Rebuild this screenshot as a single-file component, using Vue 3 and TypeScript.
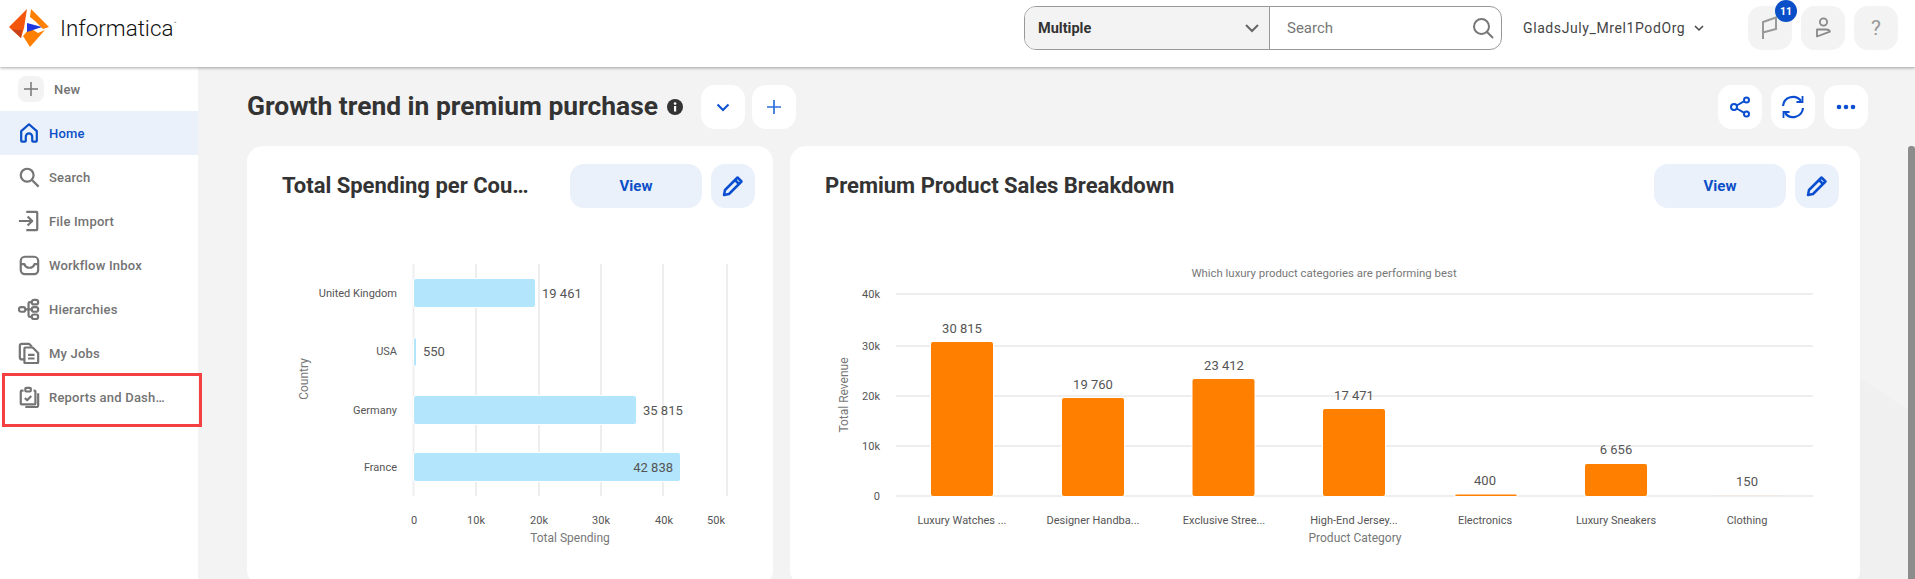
<script setup lang="ts">
const navItems = [
  { label: 'Home', icon: 'home', active: true },
  { label: 'Search', icon: 'search', active: false },
  { label: 'File Import', icon: 'import', active: false },
  { label: 'Workflow Inbox', icon: 'inbox', active: false },
  { label: 'Hierarchies', icon: 'tree', active: false },
  { label: 'My Jobs', icon: 'jobs', active: false },
  { label: 'Reports and Dash…', icon: 'report', active: false },
]

const hBars = [
  { name: 'United Kingdom', value: '19 461', y: 279, end: 535, cy: 293, lx: 542, inside: false },
  { name: 'USA', value: '550', y: 338, end: 416, cy: 351, lx: 423, inside: false },
  { name: 'Germany', value: '35 815', y: 396, end: 636, cy: 410, lx: 643, inside: false },
  { name: 'France', value: '42 838', y: 453, end: 680, cy: 467, lx: 673, inside: true },
]
const hGrid = [413.5, 476, 539, 601, 663, 727]
const hTicks = [
  { t: '0', x: 414 }, { t: '10k', x: 476 }, { t: '20k', x: 539 },
  { t: '30k', x: 601 }, { t: '40k', x: 664 }, { t: '50k', x: 716 },
]

const vGrid = [
  { t: '40k', y: 294 }, { t: '30k', y: 346 }, { t: '20k', y: 396 },
  { t: '10k', y: 446 }, { t: '0', y: 496 },
]
const vBars = [
  { name: 'Luxury Watches ...', value: '30 815', x: 931, top: 342, cx: 962, ly: 328, faint: false },
  { name: 'Designer Handba...', value: '19 760', x: 1062, top: 398, cx: 1093, ly: 384, faint: false },
  { name: 'Exclusive Stree...', value: '23 412', x: 1192.5, top: 379, cx: 1224, ly: 365, faint: false },
  { name: 'High-End Jersey...', value: '17 471', x: 1323, top: 409, cx: 1354, ly: 395, faint: false },
  { name: 'Electronics', value: '400', x: 1455, top: 494.5, cx: 1485, ly: 480, faint: false },
  { name: 'Luxury Sneakers', value: '6 656', x: 1585, top: 464, cx: 1616, ly: 449, faint: false },
  { name: 'Clothing', value: '150', x: 1717, top: 495.5, cx: 1747, ly: 481, faint: true },
]
</script>

<template>
  <div class="app">
    <header class="topbar">
      <div class="brand">
        <svg class="logo" viewBox="0 0 40 40" width="40" height="40">
          <polygon points="18,1 0,19 12,30 15,20" fill="#f4570b" />
          <polygon points="0,19 3,21.5 13,22 12,30" fill="#c9431a" />
          <polygon points="22,1 40,19 34,21 26,13 21,9" fill="#ff8000" />
          <polygon points="14,28 21,20 29,25 36,22 21,39" fill="#ff8000" />
          <polygon points="18,15 33,19 18,24" fill="#1f35e0" />
        </svg>
        <span class="brand-name">Informatica</span><span class="tm">™</span>
      </div>
      <div class="top-right">
        <div class="searchbox">
          <div class="scope">
            <span>Multiple</span>
            <svg width="16" height="10" viewBox="0 0 16 10"><path d="M2 2l6 6 6-6" fill="none" stroke="#666" stroke-width="2" /></svg>
          </div>
          <div class="search-field">
            <span>Search</span>
            <svg width="24" height="24" viewBox="0 0 24 24" fill="none" stroke="#777" stroke-width="2"><circle cx="10.5" cy="10.5" r="7.5" /><path d="M16 16l6 6" /></svg>
          </div>
        </div>
        <div class="org">
          <span>GladsJuly_Mrel1PodOrg</span>
          <svg width="10" height="7" viewBox="0 0 10 7"><path d="M1 1l4 4 4-4" fill="none" stroke="#444" stroke-width="1.5" /></svg>
        </div>
        <div class="top-icons">
          <button class="tbtn">
            <svg width="22" height="26" viewBox="0 0 22 26" fill="none" stroke="#999" stroke-width="2"><path d="M4 24V7L17 2.5V14L4 17.5" /></svg>
            <span class="badge">11</span>
          </button>
          <button class="tbtn">
            <svg width="24" height="24" viewBox="0 0 24 24" fill="none" stroke="#888" stroke-width="1.8"><circle cx="12.5" cy="6" r="3.6" /><path d="M6 13.5h9.5c2 0 3 .8 3.4 2.2L6 20.5z" stroke-linejoin="round" /></svg>
          </button>
          <button class="tbtn qmark">?</button>
        </div>
      </div>
    </header>

    <div class="body">
      <aside class="sidebar">
        <div class="new-row">
          <span class="new-btn">
            <svg width="16" height="16" viewBox="0 0 16 16"><path d="M8 1v14M1 8h14" stroke="#777" stroke-width="1.5" /></svg>
          </span>
          <span class="new-label">New</span>
        </div>
        <nav>
          <a v-for="item in navItems" :key="item.label" class="nav-item" :class="{ active: item.active }">
            <svg class="nav-icon" width="24" height="24" viewBox="0 0 24 24" fill="none" stroke="currentColor" stroke-width="2.4" stroke-linejoin="round">
              <template v-if="item.icon === 'home'">
                <path d="M12 2.5L3.5 10v10.5a1 1 0 0 0 1 1h3a1 1 0 0 0 1-1V16a3.5 3.5 0 0 1 7 0v4.5a1 1 0 0 0 1 1h3a1 1 0 0 0 1-1V10z" />
              </template>
              <template v-else-if="item.icon === 'search'">
                <circle cx="10" cy="10" r="7" /><path d="M15.5 15.5l7 7" />
              </template>
              <template v-else-if="item.icon === 'import'">
                <path d="M1 12h14M10.5 7l5 5-5 5" /><path d="M9 2h11a1 1 0 0 1 1 1v18a1 1 0 0 1-1 1H9" />
              </template>
              <template v-else-if="item.icon === 'inbox'">
                <rect x="3" y="3" width="19" height="19" rx="4.5" /><path d="M3 11h4c1 3 3 4 5.500 4s4.500-1 5.500-4h4" />
              </template>
              <template v-else-if="item.icon === 'tree'">
                <rect x="1" y="10" width="7" height="5" rx="2.500" /><rect x="15" y="2" width="7" height="5" rx="2.500" /><rect x="15" y="10" width="7" height="5" rx="2.500" /><rect x="15" y="18" width="7" height="5" rx="2.500" /><path d="M8 12.500h7M11.500 12.500V6c0-1 .5-1.500 1.500-1.500h2M11.500 12.500V19c0 1 .5 1.500 1.500 1.500h2" />
              </template>
              <template v-else-if="item.icon === 'jobs'">
                <path d="M7 19H4a2 2 0 0 1-2-2V4a2 2 0 0 1 2-2h8l3 3" /><path d="M7 7a1 1 0 0 1 1-1h8l6 6v10a1 1 0 0 1-1 1H8a1 1 0 0 1-1-1z" /><path d="M11 14h7M11 18h7" />
              </template>
              <template v-else>
                <path d="M17 5h1a1 1 0 0 1 1 1v13a1 1 0 0 1-1 1H4a1 1 0 0 1-1-1V6a1 1 0 0 1 1-1h2" /><rect x="8" y="2" width="6" height="4" rx="1" /><path d="M7.500 13l2.500 2.500 4.500-4.500" /><path d="M22 8v13a2 2 0 0 1-2 2H8" />
              </template>
            </svg>
            <span class="nav-label">{{ item.label }}</span>
          </a>
        </nav>
        <div class="highlight"></div>
      </aside>

      <main class="main">
        <div class="toolbar">
          <h1>Growth trend in premium purchase</h1>
          <svg class="info" width="16" height="16" viewBox="0 0 16 16"><circle cx="8" cy="8" r="8" fill="#333" /><rect x="7" y="7" width="2.200" height="5.500" fill="#fff" /><circle cx="8.100" cy="4.600" r="1.300" fill="#fff" /></svg>
          <button class="wbtn first">
            <svg width="14" height="9" viewBox="0 0 14 9"><path d="M1.500 1.500L7 7l5.500-5.500" fill="none" stroke="#0b4fd0" stroke-width="2" /></svg>
          </button>
          <button class="wbtn">
            <svg width="16" height="16" viewBox="0 0 16 16"><path d="M8 1v14M1 8h14" stroke="#2f6fdc" stroke-width="1.700" /></svg>
          </button>
          <div class="spacer"></div>
          <div class="actions">
            <button class="wbtn">
              <svg width="22" height="22" viewBox="0 0 22 22" fill="none" stroke="#0b4fd0" stroke-width="2"><circle cx="5" cy="11" r="3" /><circle cx="17.500" cy="4" r="2.500" /><circle cx="17.500" cy="18" r="2.500" /><path d="M7.700 9.500l7.600-4.300M7.700 12.500l7.600 4.300" /></svg>
            </button>
            <button class="wbtn">
              <svg width="24" height="24" viewBox="0 0 24 24" fill="none" stroke="#0b4fd0" stroke-width="2.200"><path d="M2 11a10 10 0 0 1 18-5" /><path d="M22 13a10 10 0 0 1-18 5" /><path d="M21.500 1v6h-6" stroke-width="1.800" /><path d="M2.500 23v-6h6" stroke-width="1.800" /></svg>
            </button>
            <button class="wbtn">
              <svg width="20" height="6" viewBox="0 0 20 6" fill="#0b4fd0"><circle cx="3" cy="3" r="2.300" /><circle cx="10" cy="3" r="2.300" /><circle cx="17" cy="3" r="2.300" /></svg>
            </button>
          </div>
        </div>

        <div class="cards">
          <section class="card narrow">
            <div class="card-head">
              <h2>Total Spending per Cou…</h2>
              <button class="view">View</button>
              <button class="edit">
                <svg width="22" height="22" viewBox="0 0 22 22" fill="none" stroke="#0b4fd0" stroke-width="2.500" stroke-linejoin="round"><path d="M2 20l1-5L15.500 2.500l4 4L7 19z" /><path d="M13 5l4 4" /></svg>
              </button>
            </div>
            <svg class="chart" viewBox="247 208 526 371" width="526" height="371">
              <line v-for="x in hGrid" :key="x" :x1="x" :x2="x" y1="264" y2="496" class="grid" />
              <g v-for="b in hBars" :key="b.name">
                <rect x="414" :y="b.y" :width="b.end - 414" height="28" rx="2" class="hbar" />
                <text x="397" :y="b.cy + 4" text-anchor="end" class="tick">{{ b.name }}</text>
                <text :x="b.lx" :y="b.cy + 5" :text-anchor="b.inside ? 'end' : 'start'" class="val">{{ b.value }}</text>
              </g>
              <text v-for="t in hTicks" :key="t.t" :x="t.x" y="524" text-anchor="middle" class="tick">{{ t.t }}</text>
              <text x="570" y="542" text-anchor="middle" class="axis">Total Spending</text>
              <text transform="translate(308 379) rotate(-90)" text-anchor="middle" class="axis">Country</text>
            </svg>
          </section>

          <section class="card wide">
            <div class="card-head">
              <h2>Premium Product Sales Breakdown</h2>
              <button class="view">View</button>
              <button class="edit">
                <svg width="22" height="22" viewBox="0 0 22 22" fill="none" stroke="#0b4fd0" stroke-width="2.500" stroke-linejoin="round"><path d="M2 20l1-5L15.500 2.500l4 4L7 19z" /><path d="M13 5l4 4" /></svg>
              </button>
            </div>
            <svg class="chart" viewBox="790 208 1070 371" width="1070" height="371">
              <text x="1324" y="277" text-anchor="middle" class="subtitle">Which luxury product categories are performing best</text>
              <g v-for="g in vGrid" :key="g.t">
                <line x1="896" x2="1813" :y1="g.y" :y2="g.y" class="grid" />
                <text x="880" :y="g.y + 4" text-anchor="end" class="tick">{{ g.t }}</text>
              </g>
              <g v-for="b in vBars" :key="b.name">
                <rect :x="b.x" :y="b.top" width="62" :height="496 - b.top" rx="2" class="vbar" :class="{ faint: b.faint }" />
                <text :x="b.cx" :y="b.ly + 5" text-anchor="middle" class="val">{{ b.value }}</text>
                <text :x="b.cx" y="524" text-anchor="middle" class="tick">{{ b.name }}</text>
              </g>
              <text x="1355" y="542" text-anchor="middle" class="axis">Product Category</text>
              <text transform="translate(848 395) rotate(-90)" text-anchor="middle" class="axis">Total Revenue</text>
            </svg>
          </section>
        </div>
        <div class="bg-shape"></div>
        <div class="scrollbar"></div>
      </main>
    </div>
  </div>
</template>

<style>
html, body { margin: 0; padding: 0; background: #f3f3f3; overflow: hidden; }
</style>

<style scoped>
.app { width: 1915px; height: 579px; overflow: hidden; font-family: Roboto, "Liberation Sans", sans-serif; display: flex; flex-direction: column; background: #f3f3f3; }
button { border: 0; padding: 0; font-family: inherit; cursor: pointer; display: flex; align-items: center; justify-content: center; }

.topbar { height: 67px; flex: none; background: #fff; display: flex; align-items: center; box-shadow: 0 1px 3px rgba(0,0,0,.35); position: relative; z-index: 3; padding-left: 9px; padding-right: 17px; box-sizing: border-box; }
.brand { display: flex; align-items: center; margin-top: -12px; }
.logo { display: block; }
.brand-name { font-family: Roboto, sans-serif; font-weight: 300; font-size: 22.400px; color: #111; margin-left: 11px; }
.tm { font-size: 5px; align-self: flex-start; margin-top: 12px; color: #555; }
.top-right { margin-left: auto; display: flex; align-items: center; margin-top: -11px; }
.searchbox { width: 478px; height: 44px; box-sizing: border-box; border: 1px solid #999; border-radius: 12px; display: flex; overflow: hidden; }
.scope { width: 245px; background: #f3f3f3; border-right: 1px solid #999; display: flex; align-items: center; justify-content: space-between; padding: 0 9px 0 13px; box-sizing: border-box; font-size: 14.500px; font-weight: 700; color: #333; }
.search-field { flex: 1; display: flex; align-items: center; justify-content: space-between; padding: 0 6px 0 17px; font-size: 15px; color: #777; }
.org { display: flex; align-items: center; gap: 9px; margin-left: 21px; font-size: 14px; letter-spacing: .6px; color: #444; width: 204px; white-space: nowrap; }
.top-icons { display: flex; gap: 9px; margin-left: 21px; }
.tbtn { width: 44px; height: 44px; border-radius: 14px; background: #f3f3f3; position: relative; }
.qmark { font-size: 21px; color: #999; }
.badge { position: absolute; top: -6px; right: -5px; width: 22px; height: 22px; border-radius: 50%; background: #0b4fc8; color: #fff; font-size: 10.500px; font-weight: 700; display: flex; align-items: center; justify-content: center; }

.body { flex: 1; display: flex; min-height: 0; }
.sidebar { width: 198px; flex: none; background: #fff; position: relative; z-index: 2; }
.new-row { height: 44px; display: flex; align-items: center; padding: 0 0 0 18px; gap: 10px; }
.new-btn { width: 26px; height: 26px; background: #f3f3f3; border-radius: 8px; display: flex; align-items: center; justify-content: center; }
.new-label, .nav-label { font-size: 13px; font-weight: 500; color: #737373; letter-spacing: .2px; }
.nav-item { height: 44px; display: flex; align-items: center; padding-left: 18px; gap: 9px; color: #757575; }
.nav-icon { width: 22px; height: 22px; flex: none; }
.nav-label { white-space: nowrap; }
.nav-item.active { background: #eaf1fb; color: #0b4fc8; }
.nav-item.active .nav-label { color: #0b4fc8; }
.highlight { position: absolute; left: 2px; top: 306px; width: 200px; height: 54px; box-sizing: border-box; border: 3px solid #f44040; }

.main { flex: 1; min-width: 0; padding: 18px 47px 0 49px; position: relative; }
.toolbar { display: flex; align-items: center; height: 44px; }
h1 { margin: -2px 0 0; font-size: 26.400px; font-weight: 700; color: #333; white-space: nowrap; }
.info { margin-left: 9px; margin-top: -1px; }
.wbtn { width: 44px; height: 44px; border-radius: 14px; background: #fff; }
.wbtn.first { margin-left: 18px; margin-right: 7px; }
.spacer { flex: 1; }
.actions { display: flex; gap: 9px; }

.cards { display: flex; gap: 17px; margin-top: 17px; margin-right: 8px; position: relative; z-index: 1; }
.card { background: #fff; border-radius: 16px; height: 440px; box-sizing: border-box; }
.narrow { width: 526px; flex: none; }
.wide { flex: 1; min-width: 0; }
.wide .card-head { padding-right: 21px; }
.card-head { display: flex; align-items: center; height: 44px; padding: 18px 18px 0 35px; gap: 9px; }
h2 { flex: 1; min-width: 0; margin: -2px 12px 0 0; font-size: 22px; font-weight: 700; color: #333; white-space: nowrap; }
.view { width: 132px; height: 44px; flex: none; background: #eaf1fb; border-radius: 14px; color: #0b4fc8; font-weight: 700; font-size: 15px; }
.edit { width: 44px; height: 44px; flex: none; background: #eaf1fb; border-radius: 14px; }
.chart { display: block; }
.grid { stroke: #eeeeee; stroke-width: 2; }
.hbar { fill: #b3e5fc; stroke: #fff; stroke-width: 2; paint-order: stroke; }
.vbar { fill: #ff8000; stroke: #fff; stroke-width: 2; paint-order: stroke; }
.vbar.faint { fill: #fbe6cf; stroke: none; }
.tick { font-size: 11px; fill: #555; }
.val { font-size: 13px; fill: #555; }
.axis { font-size: 12px; fill: #777; }
.subtitle { font-size: 11.400px; fill: #777; }
.bg-shape { position: absolute; left: 1662px; top: 311px; width: 48px; height: 201px; background: #f0f0f0; clip-path: polygon(0 0, 100% 16%, 100% 100%, 0 100%); }
.scrollbar { position: absolute; right: 0; top: 79px; width: 7px; height: 500px; background: #8c8c8c; border-radius: 3px 3px 0 0; z-index: 2; }
</style>
